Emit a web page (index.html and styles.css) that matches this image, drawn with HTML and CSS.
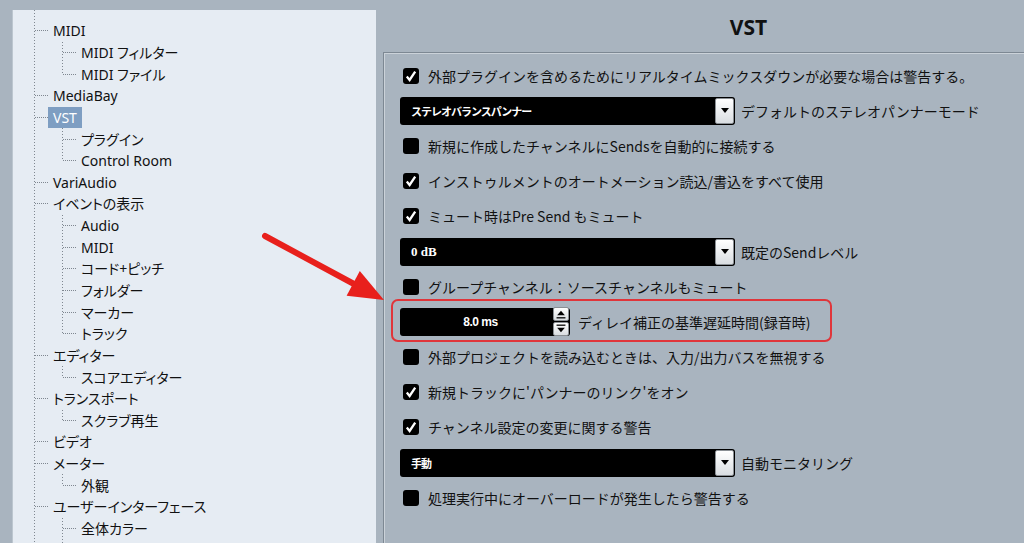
FILE: index.html
```html
<!DOCTYPE html>
<html lang="ja">
<head>
    <meta charset="UTF-8">
    <meta name="viewport" content="width=device-width, initial-scale=1.0">
    <title>環境設定 - VST</title>
    <link rel="stylesheet" href="styles.css">
</head>
<body>
    <!-- 左: 設定ツリー -->
    <div class="tree-panel">
        <ul class="tree">
            <li>
                <div class="node"><span class="stub"></span><span class="label">MIDI</span></div>
                <ul class="sub">
                    <li><div class="node"><span class="stub"></span><span class="label">MIDI フィルター</span></div></li>
                    <li><div class="node"><span class="stub"></span><span class="label">MIDI ファイル</span></div></li>
                </ul>
            </li>
            <li><div class="node"><span class="stub"></span><span class="label">MediaBay</span></div></li>
            <li>
                <div class="node"><span class="stub"></span><span class="label selected">VST</span></div>
                <ul class="sub">
                    <li><div class="node"><span class="stub"></span><span class="label">プラグイン</span></div></li>
                    <li><div class="node"><span class="stub"></span><span class="label">Control Room</span></div></li>
                </ul>
            </li>
            <li><div class="node"><span class="stub"></span><span class="label">VariAudio</span></div></li>
            <li>
                <div class="node"><span class="stub"></span><span class="label">イベントの表示</span></div>
                <ul class="sub">
                    <li><div class="node"><span class="stub"></span><span class="label">Audio</span></div></li>
                    <li><div class="node"><span class="stub"></span><span class="label">MIDI</span></div></li>
                    <li><div class="node"><span class="stub"></span><span class="label">コード+ピッチ</span></div></li>
                    <li><div class="node"><span class="stub"></span><span class="label">フォルダー</span></div></li>
                    <li><div class="node"><span class="stub"></span><span class="label">マーカー</span></div></li>
                    <li><div class="node"><span class="stub"></span><span class="label">トラック</span></div></li>
                </ul>
            </li>
            <li>
                <div class="node"><span class="stub"></span><span class="label">エディター</span></div>
                <ul class="sub">
                    <li><div class="node"><span class="stub"></span><span class="label">スコアエディター</span></div></li>
                </ul>
            </li>
            <li>
                <div class="node"><span class="stub"></span><span class="label">トランスポート</span></div>
                <ul class="sub">
                    <li><div class="node"><span class="stub"></span><span class="label">スクラブ再生</span></div></li>
                </ul>
            </li>
            <li><div class="node"><span class="stub"></span><span class="label">ビデオ</span></div></li>
            <li>
                <div class="node"><span class="stub"></span><span class="label">メーター</span></div>
                <ul class="sub">
                    <li><div class="node"><span class="stub"></span><span class="label">外観</span></div></li>
                </ul>
            </li>
            <li>
                <div class="node"><span class="stub"></span><span class="label">ユーザーインターフェース</span></div>
                <ul class="sub more">
                    <li><div class="node"><span class="stub"></span><span class="label">全体カラー</span></div></li>
                </ul>
            </li>
        </ul>
    </div>

    <!-- 右: VST 設定 -->
    <div class="prefs">
        <h2 class="prefs-title">VST</h2>
        <div class="box">
            <div class="row">
                <span class="check on"><svg viewBox="0 0 16 16"><path d="M3.8 8.6 L6.6 12 L12.2 3.6"/></svg></span>
                <span class="text">外部プラグインを含めるためにリアルタイムミックスダウンが必要な場合は警告する。</span>
            </div>
            <div class="row">
                <div class="select"><span class="value cjk">ステレオバランスパンナー</span><span class="arrow"></span></div>
                <span class="text">デフォルトのステレオパンナーモード</span>
            </div>
            <div class="row">
                <span class="check"></span>
                <span class="text">新規に作成したチャンネルにSendsを自動的に接続する</span>
            </div>
            <div class="row">
                <span class="check on"><svg viewBox="0 0 16 16"><path d="M3.8 8.6 L6.6 12 L12.2 3.6"/></svg></span>
                <span class="text">インストゥルメントのオートメーション読込/書込をすべて使用</span>
            </div>
            <div class="row">
                <span class="check on"><svg viewBox="0 0 16 16"><path d="M3.8 8.6 L6.6 12 L12.2 3.6"/></svg></span>
                <span class="text">ミュート時はPre Send もミュート</span>
            </div>
            <div class="row">
                <div class="select"><span class="value serif">0 dB</span><span class="arrow"></span></div>
                <span class="text">既定のSendレベル</span>
            </div>
            <div class="row">
                <span class="check"></span>
                <span class="text">グループチャンネル：ソースチャンネルもミュート</span>
            </div>
            <div class="row marked">
                <div class="spin">
                    <span class="spin-value">8.0 ms</span>
                    <span class="spin-btns">
                        <span class="spin-btn"><svg viewBox="0 0 11 9"><path d="M5.5 2 L8.5 5.5 L2.5 5.5 Z"/><rect x="2" y="7" width="7" height="1"/></svg></span>
                        <span class="spin-btn"><svg viewBox="0 0 11 9"><rect x="2" y="1" width="7" height="1"/><path d="M2.5 3.5 L8.5 3.5 L5.5 7 Z"/></svg></span>
                    </span>
                </div>
                <span class="text">ディレイ補正の基準遅延時間(録音時)</span>
            </div>
            <div class="row">
                <span class="check"></span>
                <span class="text">外部プロジェクトを読み込むときは、入力/出力バスを無視する</span>
            </div>
            <div class="row">
                <span class="check on"><svg viewBox="0 0 16 16"><path d="M3.8 8.6 L6.6 12 L12.2 3.6"/></svg></span>
                <span class="text">新規トラックに'パンナーのリンク'をオン</span>
            </div>
            <div class="row">
                <span class="check on"><svg viewBox="0 0 16 16"><path d="M3.8 8.6 L6.6 12 L12.2 3.6"/></svg></span>
                <span class="text">チャンネル設定の変更に関する警告</span>
            </div>
            <div class="row">
                <div class="select"><span class="value cjk">手動</span><span class="arrow"></span></div>
                <span class="text">自動モニタリング</span>
            </div>
            <div class="row">
                <span class="check"></span>
                <span class="text">処理実行中にオーバーロードが発生したら警告する</span>
            </div>
        </div>
    </div>

    <!-- 注釈の矢印 -->
    <svg class="pointer" viewBox="0 0 140 90">
        <line x1="10" y1="11" x2="99" y2="59" />
        <polygon points="129,75 91.6,70.7 104.8,46.1" />
    </svg>
</body>
</html>
```

FILE: styles.css
```css
body {
    margin: 0;
    height: 543px;
    overflow: hidden;
    display: flex;
    background: #a9b4bf;
    font-family: "Noto Sans", "Noto Sans CJK JP", sans-serif;
    font-size: 14px;
    color: #111;
    position: relative;
}

/* 左のツリー */
.tree-panel {
    width: 364px;
    margin: 10px 0 0 12px;
    background: #e6ecf3;
    overflow: hidden;
    border-left: 1px solid #bcc6cf;
    box-sizing: border-box;
    font-feature-settings: "palt";
}

.tree,
.sub {
    list-style: none;
    margin: 0;
    padding: 0 0 0 1px;
}

.tree {
    margin-left: 21px;
    padding-top: 10px;
    background-image: repeating-linear-gradient(to bottom, #7f8790 0 1px, transparent 1px 3px);
    background-size: 1px 100%;
    background-repeat: no-repeat;
    min-height: 100%;
}

.sub {
    margin-left: 27px;
    background-image: repeating-linear-gradient(to bottom, #7f8790 0 1px, transparent 1px 3px);
    background-size: 1px calc(100% - 10px);
    background-repeat: no-repeat;
}

/* 続きがある枝は下まで線を伸ばす */
.sub.more {
    padding-bottom: 30px;
    background-size: 1px 100%;
}

.node {
    display: flex;
    align-items: center;
    height: 21.65px;
    white-space: nowrap;
}

.stub {
    width: 13px;
    height: 0;
    border-top: 1px dotted #7f8790;
}

.label {
    padding: 0 5px;
    line-height: 21px;
}

.label.selected {
    background: #7e9ec2;
    color: #fff;
}

/* 右の設定 */
.prefs {
    flex: 1;
    display: flex;
    flex-direction: column;
    margin-left: 7px;
}

.prefs-title {
    margin: 0;
    height: 52px;
    line-height: 54px;
    padding-left: 90px;
    text-align: center;
    font-size: 21px;
    font-weight: bold;
    color: #111;
}

.box {
    flex: 1;
    border-top: 1px solid #7d8893;
    border-left: 1px solid #7d8893;
    box-shadow: inset 1px 1px 0 #cbd2d9;
    padding: 5px 0 0 16px;
}

.row {
    display: flex;
    align-items: center;
    height: 35.2px;
    white-space: nowrap;
    font-family: "Noto Sans CJK JP", sans-serif;
    font-size: 14px;
}

.check {
    width: 16px;
    height: 16px;
    margin: 0 9px 0 3px;
    background: #000;
    border-radius: 3px;
    display: flex;
}

.check svg {
    width: 16px;
    height: 16px;
    fill: none;
    stroke: #fff;
    stroke-width: 2.3;
}

.select {
    width: 335px;
    height: 28px;
    margin-right: 6px;
    background: #000;
    border-radius: 3px;
    display: flex;
    align-items: center;
    justify-content: space-between;
    box-sizing: border-box;
    padding: 0 1px 0 11px;
}

.value {
    color: #fff;
    font-weight: bold;
}

.value.cjk {
    font-family: "Noto Sans CJK JP", sans-serif;
    font-size: 11px;
    letter-spacing: -1px;
}

.value.serif {
    font-family: "Liberation Serif", serif;
    font-size: 13px;
}

.arrow {
    width: 17px;
    height: 24px;
    background: linear-gradient(#ffffff, #d9dde1);
    border: 1px solid #8a8f94;
    border-radius: 2px;
    display: flex;
    align-items: center;
    justify-content: center;
}

.arrow::after {
    content: "";
    border-left: 4px solid transparent;
    border-right: 4px solid transparent;
    border-top: 5px solid #000;
}

/* 数値入力 */
.marked {
    position: relative;
}

.marked::before {
    content: "";
    position: absolute;
    left: -9px;
    top: -5px;
    width: 441px;
    height: 43px;
    box-sizing: border-box;
    border: 2px solid #e0353a;
    border-radius: 7px;
}

.spin {
    width: 170px;
    height: 28px;
    margin-right: 8px;
    background: #000;
    border-radius: 3px;
    display: flex;
    align-items: center;
    box-sizing: border-box;
    padding-right: 1px;
}

.spin-value {
    flex: 1;
    text-align: center;
    color: #fff;
    font-family: "Liberation Sans", sans-serif;
    font-weight: bold;
    font-size: 12px;
    letter-spacing: -0.5px;
    padding-left: 8px;
}

.spin-btns {
    display: flex;
    flex-direction: column;
    gap: 1px;
}

.spin-btn {
    width: 14px;
    height: 12px;
    background: linear-gradient(#ffffff, #d9dde1);
    border: 1px solid #8a8f94;
    border-radius: 2px;
    display: flex;
}

.spin-btn svg {
    width: 14px;
    height: 12px;
    fill: #000;
}

.text {
    color: #111;
}

/* 矢印 */
.pointer {
    position: absolute;
    left: 255px;
    top: 225px;
    width: 140px;
    height: 90px;
}

.pointer line {
    stroke: #e8201c;
    stroke-width: 6;
    stroke-linecap: round;
}

.pointer polygon {
    fill: #e8201c;
}
```
